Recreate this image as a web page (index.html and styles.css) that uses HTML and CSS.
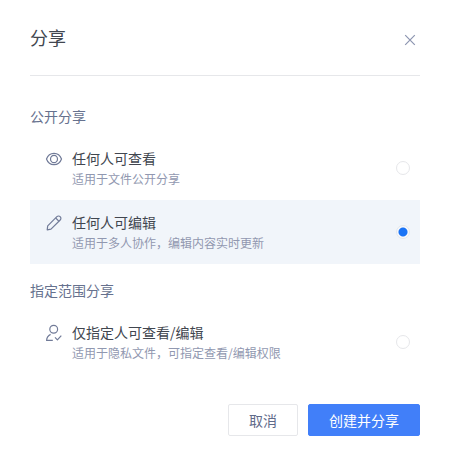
FILE: index.html
```html
<!DOCTYPE html>
<html lang="zh-CN">
<head>
<meta charset="utf-8">
<meta name="viewport" content="width=device-width, initial-scale=1">
<title>分享</title>
<link rel="stylesheet" href="styles.css">
</head>
<body>
<form class="dialog">
  <header class="dialog-header">
    <h1 class="dialog-title">分享</h1>
    <button class="close" type="button" aria-label="关闭">
      <svg class="close-icon" viewBox="0 0 12 12"><path d="M1.2 1.2l9.6 9.6M10.8 1.2l-9.6 9.6"/></svg>
    </button>
  </header>

  <section class="group">
    <h2 class="group-title">公开分享</h2>
    <label class="option">
      <svg class="option-icon" viewBox="0 0 16 16"><path d="M.5 8C1.800 4.300 4.700 2.300 8 2.300s6.200 2 7.500 5.700c-1.300 3.700-4.200 5.700-7.500 5.700S1.800 11.700.5 8z"/><ellipse cx="8" cy="8" rx="3.500" ry="3.700"/></svg>
      <span class="option-text">
        <span class="option-name">任何人可查看</span>
        <span class="option-desc">适用于文件公开分享</span>
      </span>
      <input class="radio" type="radio" name="scope">
    </label>
    <label class="option">
      <svg class="option-icon" viewBox="0 0 16 16"><path d="M1.200 14.900l.5-4L10.900 1.700a2.300 2.300 0 0 1 3.300 0 2.300 2.300 0 0 1 0 3.300L5 14.200z"/><path d="M9.700 3l3.300 3.300"/></svg>
      <span class="option-text">
        <span class="option-name">任何人可编辑</span>
        <span class="option-desc">适用于多人协作，编辑内容实时更新</span>
      </span>
      <input class="radio" type="radio" name="scope" checked>
    </label>
  </section>

  <section class="group">
    <h2 class="group-title">指定范围分享</h2>
    <label class="option">
      <svg class="option-icon" viewBox="0 0 16 16"><circle cx="7.700" cy="4.200" r="3.900"/><path d="M4.600 9.400C2.300 10.500.7 12.700.6 15.400h6.200M9 12.400l2.400 2.400 3.900-4.200"/></svg>
      <span class="option-text">
        <span class="option-name">仅指定人可查看/编辑</span>
        <span class="option-desc">适用于隐私文件，可指定查看/编辑权限</span>
      </span>
      <input class="radio" type="radio" name="scope">
    </label>
  </section>

  <footer class="actions">
    <button class="button" type="button">取消</button>
    <button class="button button-primary" type="submit">创建并分享</button>
  </footer>
</form>
</body>
</html>
```
FILE: styles.css
```css
* {
  box-sizing: border-box;
}

body {
  margin: 0;
  background: #fff;
  color: #41464f;
  font-family: "Noto Sans CJK SC", sans-serif;
  font-size: 14px;
  line-height: 22px;
}

h1,
h2 {
  margin: 0;
  font-weight: 400;
}

.dialog {
  padding: 0 30px 28px;
}

.dialog-header {
  display: flex;
  align-items: flex-end;
  justify-content: space-between;
  padding: 24px 4px 24px 0;
  border-bottom: 1px solid #e6e7ea;
  margin-bottom: 29px;
}

.dialog-title {
  font-size: 18px;
  line-height: 27px;
}

.close {
  display: flex;
  padding: 0 0 5px;
  border: 0;
  background: none;
  cursor: pointer;
}

.close-icon {
  width: 12px;
  height: 12px;
  fill: none;
  stroke: #8c95b0;
  stroke-width: 1.2;
}

.group + .group {
  margin-top: 15px;
}

.group-title {
  margin-bottom: 9px;
  color: #66718e;
  font-size: 14px;
}

.option {
  display: flex;
  align-items: center;
  gap: 10px;
  padding: 11px 10px 11px 16px;
  cursor: pointer;
}

.option:has(:checked) {
  background: #f1f5fa;
}

.option-icon {
  flex: none;
  align-self: flex-start;
  width: 16px;
  height: 16px;
  margin-top: 4px;
  overflow: visible;
  fill: none;
  stroke: #717b98;
  stroke-width: 1.2;
  stroke-linejoin: round;
}

.option-text {
  display: flex;
  flex: 1;
  flex-direction: column;
}

.option-desc {
  color: #9198b0;
  font-size: 12px;
  line-height: 20px;
}

.radio {
  flex: none;
  width: 14px;
  height: 14px;
  margin: 0;
  appearance: none;
  border: 1px solid #e6e7ea;
  border-radius: 50%;
  background: #fff;
}

.radio:checked {
  background: radial-gradient(circle, #1a73f5 4px, #f7f9fc 5px);
}

.actions {
  display: flex;
  justify-content: flex-end;
  gap: 10px;
  margin-top: 30px;
}

.button {
  height: 32px;
  padding: 0 20px;
  border: 1px solid #e6e7ea;
  border-radius: 2px;
  background: #fff;
  color: #5f6b8a;
  font: inherit;
  cursor: pointer;
}

.button-primary {
  border-color: #417ff9;
  background: #417ff9;
  color: #fff;
}
```
